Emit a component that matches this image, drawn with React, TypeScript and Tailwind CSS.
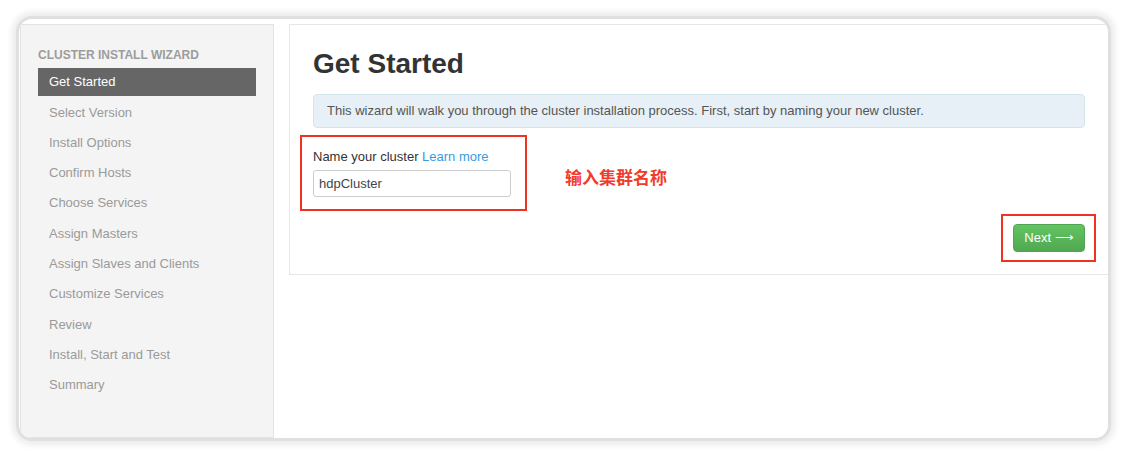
import React from 'react';

// Wizard steps shown in the left rail
const steps = [
  'Get Started',
  'Select Version',
  'Install Options',
  'Confirm Hosts',
  'Choose Services',
  'Assign Masters',
  'Assign Slaves and Clients',
  'Customize Services',
  'Review',
  'Install, Start and Test',
  'Summary',
];

const App = () => {
  const active = 0;

  return (
    <div className="min-h-screen bg-white pt-[16px] pl-[16px] font-['Liberation_Sans',Arial,sans-serif]">
      {/* Framed screenshot card */}
      <div className="w-[1095px] h-[425px] rounded-[16px] border-[3px] border-[#e0e0e0] bg-white shadow-[0_0_6px_4px_rgba(0,0,0,0.08)] overflow-hidden">
        <div className="flex h-full pt-[5px] pl-px">
          {/* Sidebar */}
          <aside className="w-[254px] h-[414px] bg-[#f4f4f4] border border-[#e3e3e3] pt-[22px] pl-[17px]">
            <div className="text-[12px] leading-[16px] font-bold text-[#9c9c9c] uppercase mb-[5px]">
              Cluster Install Wizard
            </div>
            <ul className="flex flex-col gap-[2.3px]">
              {steps.map((s, i) => (
                <li
                  key={s}
                  className={`w-[218px] h-[28px] flex items-center pl-[11px] text-[13px] ${
                    i === active ? 'bg-[#666666] text-white' : 'text-[#9a9a9a]'
                  }`}
                >
                  {s}
                </li>
              ))}
            </ul>
          </aside>

          {/* Main panel */}
          <div className="flex-1 ml-[15px]">
            <div className="border border-r-0 border-[#e6e6e6] pt-[23px] pl-[23px] pr-[23px] pb-[22px]">
              <h1 className="text-[28px] leading-[31px] font-bold text-[#333333] mb-[15px]">Get Started</h1>
              <div className="h-[34px] flex items-center px-[13px] bg-[#e6f0f6] border border-[#d5e5ef] rounded-[4px] text-[13px] text-[#555555]">
                This wizard will walk you through the cluster installation process. First, start by naming your new
                cluster.
              </div>

              <div className="flex items-start mt-[20px]">
                <div className="relative">
                  <div className="text-[13px] leading-[18px] text-[#333333]">
                    Name your cluster <a className="text-[#3a9bdc]">Learn more</a>
                  </div>
                  <input
                    readOnly
                    value="hdpCluster"
                    className="mt-[4px] w-[198px] h-[27px] border border-[#cccccc] rounded-[3px] px-[5px] text-[13px] text-[#444444] outline-none"
                  />
                  {/* annotation box */}
                  <div className="absolute left-[-13px] top-[-13px] w-[227px] h-[76px] border-2 border-[#ee3322]" />
                </div>
                <div className="ml-[54px] mt-[17px] text-[17px] leading-[24px] font-bold text-[#f23b2b] font-['Noto_Sans_CJK_SC',sans-serif]">
                  输入集群名称
                </div>
              </div>

              <div className="flex justify-end mt-[27px]">
                <div className="relative">
                  <button className="w-[72px] h-[28px] rounded-[4px] bg-gradient-to-b from-[#62c462] to-[#51a851] border border-[#4fa54f] text-white text-[13px]">
                    Next ⟶
                  </button>
                  <div className="absolute left-[-12px] top-[-10px] w-[95px] h-[48px] border-2 border-[#ee3322]" />
                </div>
              </div>
            </div>
          </div>
        </div>
      </div>
    </div>
  );
};

export default App;
